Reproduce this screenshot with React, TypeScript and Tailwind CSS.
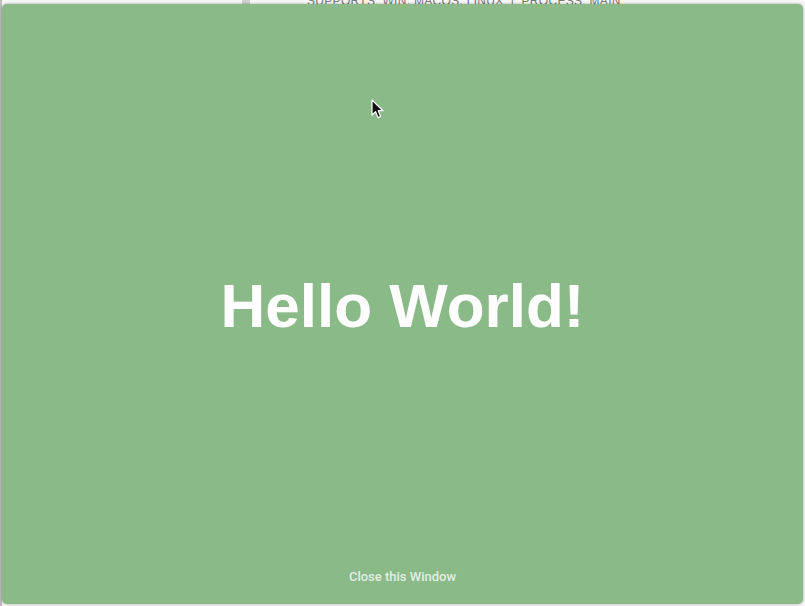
import React from 'react';

const Cursor = () => (
  <svg width="14" height="21" viewBox="0 0 14 21" className="absolute left-[371px] top-[99px]">
    <path
      d="M1 1 L1 16 L4.6 12.6 L7 18.6 L9.6 17.5 L7.2 11.7 L12 11.7 Z"
      fill="#111"
      stroke="#fff"
      strokeWidth="1.2"
      strokeLinejoin="round"
    />
  </svg>
);

export default function App() {
  return (
    <div className="relative w-[805px] h-[606px] overflow-hidden bg-[#f7f7f7] font-['Liberation_Sans',Arial,sans-serif]">
      {/* page behind the window, mostly hidden */}
      <div className="absolute left-[307px] top-[-8px] text-[12px] tracking-wide text-[#777] whitespace-nowrap">
        SUPPORTS: WIN, MACOS, LINUX &nbsp;|&nbsp; PROCESS: MAIN
      </div>
      <div className="absolute left-0 top-0 h-full w-[2px] bg-[#bdbdbd]" />
      <div className="absolute left-[242px] top-0 h-[4px] w-[8px] bg-[#cfcfcf]" />
      <div className="absolute left-[16px] top-[603px] text-[12px] text-[#444] whitespace-nowrap">
        Open from protocol handler
      </div>

      {/* the window */}
      <div className="absolute left-[2px] top-[4px] w-[801px] h-[600px] rounded-[5px] bg-[#8aba88] shadow-[0_0_3px_rgba(0,0,0,0.35)] flex flex-col">
        <div className="h-[54px]" />
        <div className="flex-1 flex items-center justify-center">
          <h1 className="text-[62px] leading-none font-bold text-white">Hello World!</h1>
        </div>
        <div className="h-[50px] flex justify-center pt-[15px]">
          <span className="text-[13px] leading-4 font-medium text-[#e2eee1] font-['Roboto','Liberation_Sans',sans-serif]">
            Close this Window
          </span>
        </div>
      </div>

      <Cursor />
    </div>
  );
}
